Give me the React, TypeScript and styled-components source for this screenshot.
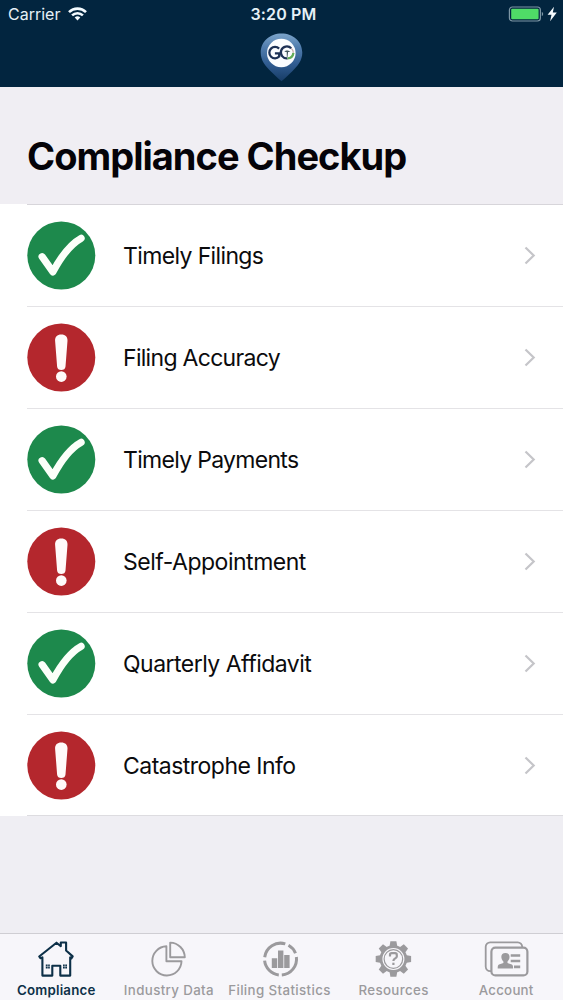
import React from "react";
import styled, { createGlobalStyle } from "styled-components";

const GlobalStyle = createGlobalStyle`
  * { box-sizing: border-box; }
  body { margin: 0; background: #efeef3; font-family: Inter, "Liberation Sans", sans-serif; }
`;

const Screen = styled.div`
  display: flex;
  flex-direction: column;
  width: 563px;
  height: 1000px;
  overflow: hidden;
  background: #efeef3;
`;

const Header = styled.header`
  display: flex;
  flex-direction: column;
  align-items: center;
  height: 87px;
  background: #02253f;
`;

const StatusBar = styled.div`
  display: grid;
  grid-template-columns: 1fr auto 1fr;
  align-items: center;
  width: 100%;
  height: 28px;
  padding: 0 6px 0 8px;
  margin-bottom: 5px;
  color: #e6f1f7;
  white-space: nowrap;
`;

const Carrier = styled.div`
  display: flex;
  align-items: center;
  gap: 8px;
  font-size: 16px;
  letter-spacing: 0px;
`;

const Clock = styled.div`
  padding-left: 2px;
  font-size: 16px;
  font-weight: 600;
  letter-spacing: 0.15px;
`;

const Power = styled.div`
  display: flex;
  align-items: center;
  justify-content: flex-end;
`;

const Heading = styled.div`
  display: flex;
  align-items: flex-start;
  height: 117px;
  padding: 46px 0 0 27px;
  background: #f0eef3;
`;

const Title = styled.h1`
  margin: 0;
  font-size: 38px;
  line-height: 46px;
  font-weight: 700;
  letter-spacing: -0.98px;
  white-space: nowrap;
  color: #050308;
`;

const List = styled.div`
  display: grid;
  grid-template-rows: repeat(6, 1fr);
  height: 612px;
  padding-left: 27px;
  background: #fff;
`;

const Row = styled.div`
  display: flex;
  align-items: center;
  padding-right: 26px;
  padding-bottom: 1px;
  border-top: 1px solid #e4e3e6;
  &:first-child { border-top-color: #d7d5da; }
  &:last-child { padding-bottom: 0; border-bottom: 1px solid #dddce0; }
`;

const Label = styled.span<{ $spacing: number }>`
  flex: 1;
  margin-left: 28px;
  padding-top: 1px;
  font-size: 23px;
  line-height: 28px;
  letter-spacing: ${(p) => p.$spacing}px;
  white-space: nowrap;
  color: #0b0b0d;
`;

const Spacer = styled.div`
  flex: 1;
`;

const TabBar = styled.nav`
  display: grid;
  grid-template-columns: repeat(5, 1fr);
  height: 67px;
  border-top: 1px solid #cfced3;
  background: #f7f6fa;
`;

const Tab = styled.div<{ $active?: boolean }>`
  display: flex;
  flex-direction: column;
  align-items: center;
  padding-top: 6px;
  color: ${(p) => (p.$active ? "#0d3048" : "#9b9a9d")};
`;

const TabLabel = styled.span<{ $active?: boolean; $spacing: number; $shift?: number }>`
  margin-top: 4px;
  padding-right: ${(p) => p.$shift ?? 0}px;
  font-size: 13.3px;
  line-height: 16px;
  font-weight: ${(p) => (p.$active ? 600 : 500)};
  letter-spacing: ${(p) => p.$spacing}px;
  white-space: nowrap;
`;

const StatusSvg = styled.svg`
  display: block;
  flex: none;
  overflow: visible;
`;

const WifiIcon = () => (
  <svg width="19" height="14" viewBox="0 0 19 14" fill="none" stroke="#f4fbff" strokeWidth="2.6">
    <path d="M1 5.1a12.2 12.2 0 0 1 17 0M4.1 8.4a7.8 7.8 0 0 1 10.8 0" />
    <path d="M6.7 10.6a4.1 4.1 0 0 1 5.6 0L9.5 13.5z" fill="#f4fbff" stroke="none" />
  </svg>
);

const BatteryIcon = () => (
  <svg width="49" height="16" viewBox="0 0 49 16">
    <rect x="1.4" y="1" width="31" height="14" rx="3" fill="none" stroke="#7d96a5" strokeWidth="1.2" />
    <rect x="3.2" y="2.8" width="27.4" height="10.4" rx="1" fill="#4fdc67" />
    <path d="M33.8 6c1.8.5 1.8 3.5 0 4z" fill="#7d96a5" />
    <path d="M46 .8l-6.400 8h3.900l-1.400 6.400 6.700-8.600h-4z" fill="#f7fcff" />
  </svg>
);

const PinLogo = () => (
  <svg width="44" height="49" viewBox="0.5 0 44 49" style={{ display: "block" }}>
    <defs>
      <linearGradient id="pin" x1="0" y1="0" x2="0" y2="1">
        <stop offset="0" stopColor="#7ba4ca" />
        <stop offset="0.28" stopColor="#527eae" />
        <stop offset="0.65" stopColor="#2f5b90" />
        <stop offset="1" stopColor="#173c66" />
      </linearGradient>
    </defs>
    <path d="M22 .4C10.2 .4 1.2 8.5 1.2 19.6c0 8 4.8 13.8 10 18.600 3.600 3.400 6.600 6.700 10.800 10 4.200-3.300 7.200-6.600 10.800-10 5.200-4.800 10-10.600 10-18.600C42.800 8.500 33.800.4 22 .4z" fill="url(#pin)" />
    <circle cx="21.800" cy="20" r="14.300" fill="#fbfdff" />
    <g fill="none" strokeWidth="2.300">
      <path d="M19.600 15.600a5.700 5.700 0 1 0 .1 7.900v-3.100h-4.300" stroke="#1d3155" />
      <path d="M31.700 15.300a6 6 0 1 0-3.700 10.100" stroke="#1d3155" />
      <path d="M28 25.400c3.500-.2 5.500-2.400 5.900-5.600" stroke="#62ad58" />
      <path d="M31.700 15.300c1.300 1 2 2.500 2.200 4.500" stroke="#c5a9a8" strokeWidth="1.100" />
    </g>
    <path d="M24.800 18.800c1.300-1.800 4.400-2.100 6.100.3l-2.300-.2-.6 5h-.7l-.1-4.900z" fill="#42575d" />
  </svg>
);

const StatusIcon = ({ ok }: { ok: boolean }) => (
  <StatusSvg width="68" height="68" viewBox="-0.3 -0.5 68 68">
    <circle cx="34" cy="34" r="34" fill={ok ? "#1d894c" : "#b4272d"} />
    {ok ? (
      <path d="M14.800 35.200l10.800 15.200C33.500 35.500 43.500 22.500 53.800 16.800" fill="none" stroke="#fbfff9" strokeWidth="7.200" strokeLinecap="round" strokeLinejoin="round" />
    ) : (
      <g fill="#fffafa">
        <path d="M34 11c-4.200 0-6.400 2.500-6.200 6.200l2 25.700c.2 2.200 1.800 3.600 4.200 3.600s4-1.400 4.200-3.600l2-25.700c.2-3.700-2-6.200-6.200-6.200z" />
        <circle cx="34" cy="53.100" r="5.300" />
      </g>
    )}
  </StatusSvg>
);

const Chevron = () => (
  <svg width="14" height="20" viewBox="0 0 14 20" fill="none" stroke="#c5c5c9" strokeWidth="2.2">
    <path d="M2.500 2.500l8.200 8-8.200 8" />
  </svg>
);

const HouseIcon = () => (
  <svg width="38" height="38" viewBox="0 0 38 38" fill="none" stroke="currentColor" strokeWidth="2.1" strokeLinejoin="round">
    <path d="M2.200 16.500L19.500 2.700l4.300 3.500V2.500h5.300v8l6.600 5.900-1.300 1.900-1.200-.9v18.200h-9.900V25.800h-8v9.800H5.400V17.400l-2 .8z" />
    <path d="M8.800 24.400h4v4h-4zM26 24.400h4v4h-4z" fill="currentColor" stroke="none" />
    <path d="M10.800 24v5M8.500 26.400h4.600M28 24v5M25.700 26.400h4.600" stroke="#f7f6fa" strokeWidth=".5" />
  </svg>
);

const PieIcon = () => (
  <svg width="38" height="38" viewBox="0.5 0 38 38" fill="none" stroke="currentColor" strokeWidth="1.9" strokeLinejoin="round">
    <path d="M16.900 6.300A14.600 14.600 0 1 0 32 21.300H16.900z" />
    <path d="M20.700 2.600a15 15 0 0 1 14.600 14.700H20.700z" />
  </svg>
);

const StatsIcon = () => (
  <svg width="38" height="38" viewBox="0.5 0 38 38">
    <path d="M3.200 17.200A16 16 0 0 1 23.800 3.900M27 5.300a16 16 0 0 1 7 8M34.900 17a16 16 0 0 1-14.600 18M17.300 34.900A16 16 0 0 1 3.100 20.700" fill="none" stroke="currentColor" strokeWidth="3" />
    <path d="M10.300 18.300h5.400v9.600h-5.400zM16.500 10.500h5.400v17.400h-5.400zM22.700 15h5.400v12.900h-5.400z" fill="currentColor" />
  </svg>
);

const GearIcon = () => (
  <svg width="38" height="38" viewBox="0.6 0 38 38" fill="none" stroke="currentColor">
    {[0, 45, 90, 135, 180, 225, 270, 315].map((angle) => (
      <path key={angle} d="M15 7l1-5.700h6l1 5.700z" fill="currentColor" stroke="none" transform={`rotate(${angle} 19 19)`} />
    ))}
    <circle cx="19" cy="19" r="12.400" strokeWidth="2.800" />
    <circle cx="19" cy="19" r="9.300" strokeWidth="1.200" />
    <path d="M15.600 16.500v-1.700c0-1 .7-1.600 1.700-1.600h3.400c1 0 1.700.7 1.700 1.700v1.500c0 2.200-3.400 1.900-3.400 4.600" strokeWidth="2.200" />
    <path d="M17.900 22.700h2.200v2.300h-2.200z" fill="currentColor" stroke="none" />
  </svg>
);

const AccountIcon = () => (
  <svg width="46" height="38" viewBox="0.8 0 46 38" fill="none" stroke="currentColor" strokeWidth="2">
    <path d="M8.200 31.100H7a4.500 4.500 0 0 1-4.500-4.500V6.800A4.500 4.500 0 0 1 7 2.300h27.500a4.500 4.500 0 0 1 4.500 4.500v.9" strokeWidth="1.800" />
    <rect x="8.200" y="7.700" width="36" height="27.700" rx="4" strokeWidth="2.200" />
    <path d="M22.200 13c-3 0-4.400 1.900-4 4.500.2 1.700 1 3.100 2 4v1.600l-4.400 1.500c-1 .4-1.300 1.400-1.300 3.800h15.400c0-2.400-.3-3.400-1.300-3.800l-4.300-1.500v-1.600c1.200-1 2-2.500 2-4.200.2-2.600-1.200-4.300-4.100-4.300z" fill="currentColor" stroke="none" />
    <path d="M27.500 15.500H37M27.500 21H37M30.800 26.800H37" strokeWidth="2.700" />
  </svg>
);

const rows = [
  { label: "Timely Filings", ok: true, spacing: -0.63 },
  { label: "Filing Accuracy", ok: false, spacing: -0.7 },
  { label: "Timely Payments", ok: true, spacing: -0.7 },
  { label: "Self-Appointment", ok: false, spacing: -0.48 },
  { label: "Quarterly Affidavit", ok: true, spacing: -0.52 },
  { label: "Catastrophe Info", ok: false, spacing: -0.52 },
];

const tabs = [
  { label: "Compliance", Icon: HouseIcon, active: true, spacing: 0.2 },
  { label: "Industry Data", Icon: PieIcon, spacing: 0.36 },
  { label: "Filing Statistics", Icon: StatsIcon, spacing: 0.38, shift: 4 },
  { label: "Resources", Icon: GearIcon, spacing: 0.36, shift: 1 },
  { label: "Account", Icon: AccountIcon, spacing: 0.24, shift: 1 },
];

export default function App() {
  return (
    <Screen>
      <GlobalStyle />
      <Header>
        <StatusBar>
          <Carrier>Carrier<WifiIcon /></Carrier>
          <Clock>3:20 PM</Clock>
          <Power><BatteryIcon /></Power>
        </StatusBar>
        <PinLogo />
      </Header>
      <Heading><Title>Compliance Checkup</Title></Heading>
      <List>
        {rows.map((row) => (
          <Row key={row.label}>
            <StatusIcon ok={row.ok} />
            <Label $spacing={row.spacing}>{row.label}</Label>
            <Chevron />
          </Row>
        ))}
      </List>
      <Spacer />
      <TabBar>
        {tabs.map(({ label, Icon, active, spacing, shift }) => (
          <Tab key={label} $active={active}>
            <Icon />
            <TabLabel $active={active} $spacing={spacing} $shift={shift}>{label}</TabLabel>
          </Tab>
        ))}
      </TabBar>
    </Screen>
  );
}
